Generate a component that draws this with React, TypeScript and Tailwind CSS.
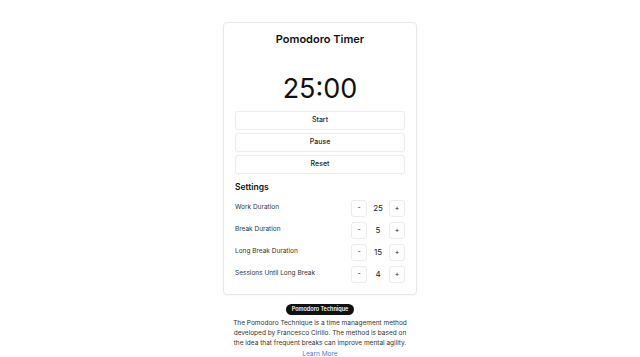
import React, { useState } from "react";

type Setting = {
  label: string;
  value: number;
};

const initialSettings: Setting[] = [
  { label: "Work Duration", value: 25 },
  { label: "Break Duration", value: 5 },
  { label: "Long Break Duration", value: 15 },
  { label: "Sessions Until Long Break", value: 4 },
];

const Stepper = (props: { value: number; onChange: (v: number) => void }) => {
  const { value, onChange } = props;
  return (
    <div className="flex items-center">
      <button
        className="w-[16px] h-[17px] flex items-center justify-center rounded-[3px] border border-[#ececec] bg-white text-[7px] text-[#222]"
        onClick={() => onChange(Math.max(1, value - 1))}>
        -
      </button>
      <span className="w-[22px] text-center text-[8px] text-[#222]">{value}</span>
      <button
        className="w-[16px] h-[17px] flex items-center justify-center rounded-[3px] border border-[#ececec] bg-white text-[7px] text-[#222]"
        onClick={() => onChange(value + 1)}>
        +
      </button>
    </div>
  );
};

export default function App() {
  const [settings, setSettings] = useState(initialSettings);

  const updateSetting = (idx: number, v: number) => {
    setSettings((prev) => prev.map((s, i) => (i === idx ? { ...s, value: v } : s)));
  };

  const work = settings[0].value;

  return (
    <div
      className="w-full min-h-[357px] bg-white flex flex-col items-center pt-[22px] text-[#111]"
      style={{ fontFamily: "Inter, 'Liberation Sans', sans-serif" }}>
      <div className="w-[194px] border border-[#e8e8e8] rounded-[4px] shadow-[0_1px_2px_rgba(0,0,0,0.04)] px-[11px] pt-[8px] pb-[11px] flex flex-col">
        <h1 className="text-center text-[11px] leading-[16px] font-semibold">Pomodoro Timer</h1>
        <div className="mt-[25px] text-center text-[27px] leading-[34px] font-normal">
          {String(work).padStart(2, "0")}:00
        </div>
        <div className="mt-[5px] flex flex-col gap-[3px]">
          {["Start", "Pause", "Reset"].map((label) => (
            <button
              key={label}
              className="h-[19px] w-full rounded-[3px] border border-[#ececec] bg-white text-[7px] font-medium text-[#222]">
              {label}
            </button>
          ))}
        </div>
        <h2 className="mt-[6px] text-[8.5px] leading-[14px] font-semibold">Settings</h2>
        <div className="mt-[5px] flex flex-col gap-[4px]">
          {settings.map((s, i) => (
            <div key={s.label} className="h-[18px] flex items-center justify-between">
              <span className="text-[6.5px] text-[#333]">{s.label}</span>
              <Stepper value={s.value} onChange={(v) => updateSetting(i, v)} />
            </div>
          ))}
        </div>
      </div>

      <span className="mt-[9px] h-[11px] px-[6px] rounded-full bg-[#111] text-white text-[5.5px] font-semibold leading-[11px]">
        Pomodoro Technique
      </span>
      <p className="mt-[3px] w-[182px] text-center text-[6.5px] leading-[10px] text-[#333]">
        The Pomodoro Technique is a time management method developed by Francesco Cirillo. The method is based on the idea that frequent breaks can improve mental agility.
      </p>
      <a href="#" className="mt-[1px] text-[6.5px] leading-[10px] text-[#3b82f6] underline">
        Learn More
      </a>
    </div>
  );
}
